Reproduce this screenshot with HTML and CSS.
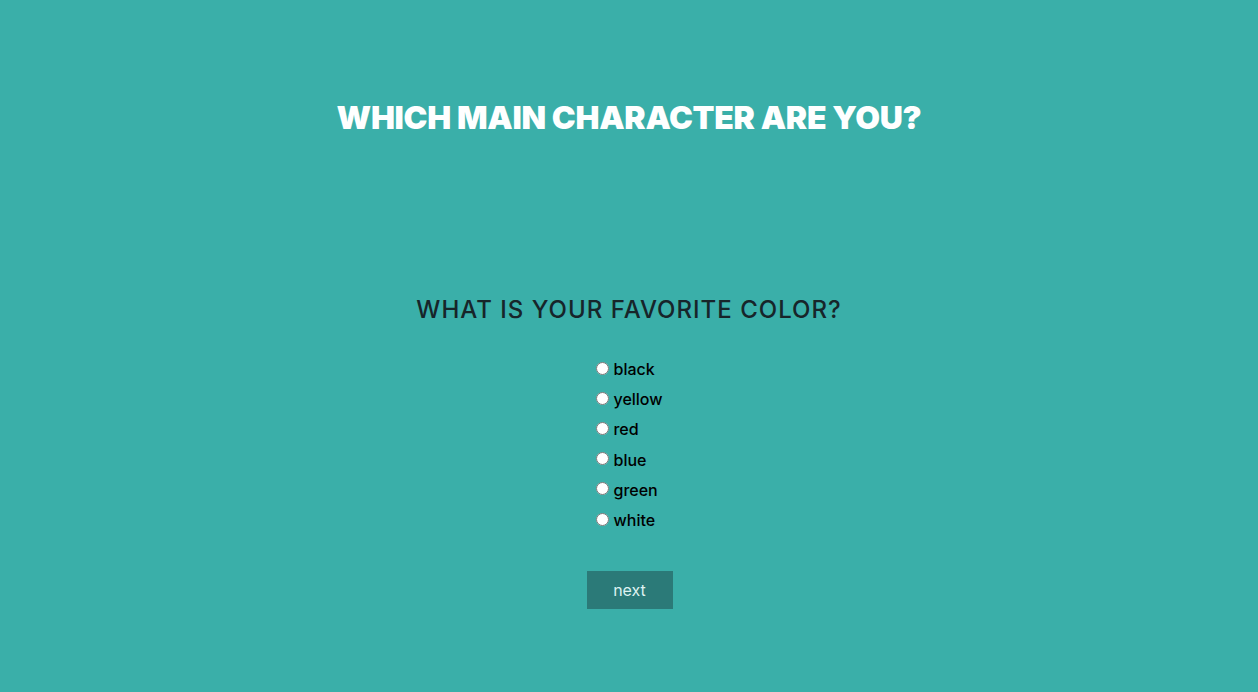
FILE: index.html
```html
<!DOCTYPE html>
<html>
<head>
<meta charset="utf-8">
<link rel="stylesheet" href="styles.css">
</head>
<body>
<main class="page">
  <h1 class="title">WHICH MAIN CHARACTER ARE YOU?</h1>
  <section class="quiz">
    <h2 class="question">WHAT IS YOUR FAVORITE COLOR?</h2>
    <div class="options">
      <label class="option"><input type="radio" name="color"><span>black</span></label>
      <label class="option"><input type="radio" name="color"><span>yellow</span></label>
      <label class="option"><input type="radio" name="color"><span>red</span></label>
      <label class="option"><input type="radio" name="color"><span>blue</span></label>
      <label class="option"><input type="radio" name="color"><span>green</span></label>
      <label class="option"><input type="radio" name="color"><span>white</span></label>
    </div>
    <button class="next">next</button>
  </section>
</main>
</body>
</html>
```
FILE: styles.css
```css
html, body {
  margin: 0;
  padding: 0;
  background: #3aafa9;
  height: 100%;
}
.page {
  display: flex;
  flex-direction: column;
  align-items: center;
  padding-top: 98px;
  font-family: "Inter", sans-serif;
}
.title {
  margin: 0;
  font-family: "Inter", sans-serif;
  font-weight: 900;
  font-size: 32px;
  line-height: 40px;
  color: #feffff;
  letter-spacing: -0.3px;
}
.quiz {
  display: flex;
  flex-direction: column;
  align-items: center;
  margin-top: 154px;
}
.question {
  margin: 0;
  font-family: "Inter", sans-serif;
  font-weight: 500;
  font-size: 24px;
  line-height: 36px;
  color: #17252a;
  letter-spacing: 1px;
}
.options {
  display: flex;
  flex-direction: column;
  align-items: flex-start;
  margin-top: 26px;
  margin-left: 1px;
}
.option {
  display: flex;
  align-items: center;
  height: 30.2px;
  font-family: "Inter", sans-serif;
  font-weight: 500;
  font-size: 16px;
  color: #000;
}
.option input {
  margin: 0 4px 2px 0;
  width: 13px;
  height: 13px;
}
.next {
  margin-top: 36px;
  margin-left: 1px;
  width: 86px;
  height: 38px;
  border: none;
  background: #2b7a78;
  color: #def2f1;
  font-family: "Inter", sans-serif;
  font-size: 16px;
  cursor: pointer;
}
```
